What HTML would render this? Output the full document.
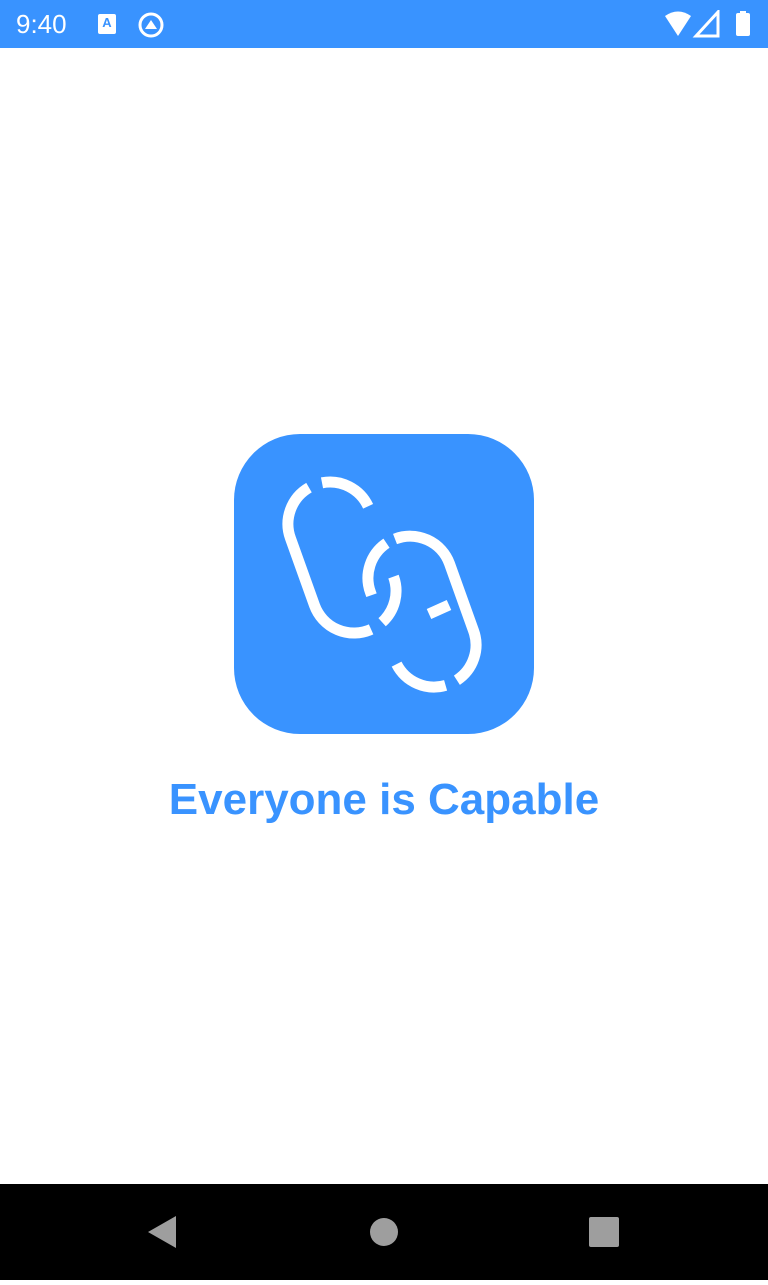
<!DOCTYPE html>
<html><head><style>
body{margin:0;width:768px;height:1280px;background:#fff;position:relative;font-family:"Liberation Sans",sans-serif;overflow:hidden}
.sb{position:absolute;top:0;left:0;width:768px;height:48px;background:#3993ff;color:#fff}
.nav{position:absolute;bottom:0;left:0;width:768px;height:96px;background:#000}
</style></head><body>
<div class="sb">
<div style="position:absolute;left:16px;top:9px;font-size:26px;">9:40</div>
<div style="position:absolute;left:98px;top:14px;width:18px;height:20px;background:#fff;border-radius:2px;color:#3993ff;font-size:13px;font-weight:bold;text-align:center;line-height:17px">A</div>
<svg style="position:absolute;left:136px;top:10px" width="30" height="30"><circle cx="15" cy="15" r="11" fill="none" stroke="#fff" stroke-width="3"/><path d="M9 19 L15 10 L21 19Z" fill="#fff"/></svg>
<svg style="position:absolute;left:660px;top:10px" width="100" height="28"><path d="M5 6 Q18 -3 31 6 L18 26Z" fill="#fff"/><path d="M36 26 L58 2 L58 26Z" fill="none" stroke="#fff" stroke-width="3"/><rect x="76" y="3" width="14" height="23" rx="2" fill="#fff"/><rect x="80" y="1" width="6" height="3" fill="#fff"/></svg>
</div>
<div style="position:absolute;left:234px;top:434px;width:300px;height:300px;background:#3993ff;border-radius:66px"></div>
<svg style="position:absolute;left:0;top:0" width="768" height="1280">
<g fill="none" stroke="#fff" stroke-width="11">
<path d="M309 487.6 A42 42 0 0 0 290.5 538.4 L314.5 605.4 A42 42 0 0 0 371.1 629.4"/>
<path d="M322 482.8 A42 42 0 0 1 368.1 506.3"/>
<path d="M393.5 576.6 A42 42 0 0 1 382.1 622.2"/>
<path d="M386.5 543.2 A42 42 0 0 0 370.5 592.4 L371.5 595.2"/>
<path d="M395 539 A42 42 0 0 1 449.5 563.6 L473.5 630.6 A42 42 0 0 1 456.9 680.2"/>
<path d="M445.6 685.4 A42 42 0 0 1 396.6 664.1"/>
<path d="M429 614 L449 605"/>
</g>
</svg>
<div style="position:absolute;left:0;width:768px;top:775px;text-align:center;color:#3993ff;font-size:44px;font-weight:bold;">Everyone is Capable</div>
<div class="nav">
<svg width="768" height="96"><path d="M176 32 L176 64 L148 48Z" fill="#9e9e9e"/><circle cx="384" cy="48" r="14" fill="#9e9e9e"/><rect x="589" y="33" width="30" height="30" rx="2" fill="#9e9e9e"/></svg>
</div>
</body></html>
